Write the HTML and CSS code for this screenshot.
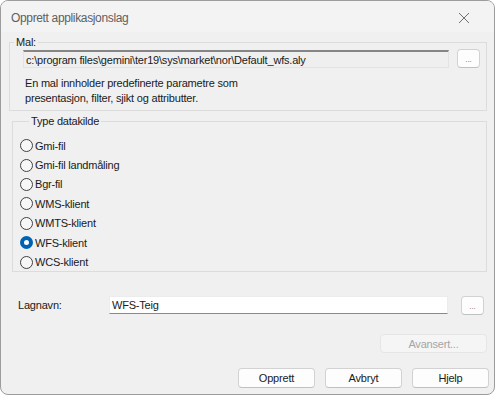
FILE: index.html
```html
<!DOCTYPE html>
<html lang="no">
<head>
  <meta charset="UTF-8">
  <title>Opprett applikasjonslag</title>
  <link rel="stylesheet" href="styles.css">
</head>
<body>
  <div class="window">
    <div class="titlebar">
      <span class="title">Opprett applikasjonslag</span>
      <svg class="close" width="12" height="12" viewBox="0 0 12 12">
        <path d="M1 1 L11 11 M11 1 L1 11" stroke="#707070" stroke-width="1" fill="none"/>
      </svg>
    </div>

    <div class="content">
      <fieldset class="group group-mal">
        <legend>Mal:</legend>
        <div class="path-row">
          <div class="readonly-box">c:\program files\gemini\ter19\sys\market\nor\Default_wfs.aly</div>
          <button class="btn btn-dots">...</button>
        </div>
        <p class="hint">En mal innholder predefinerte parametre som<br>presentasjon, filter, sjikt og attributter.</p>
      </fieldset>

      <fieldset class="group group-type">
        <legend>Type datakilde</legend>
        <label class="radio"><span class="dot"></span>Gmi-fil</label>
        <label class="radio"><span class="dot"></span>Gmi-fil landmåling</label>
        <label class="radio"><span class="dot"></span>Bgr-fil</label>
        <label class="radio"><span class="dot"></span>WMS-klient</label>
        <label class="radio"><span class="dot"></span>WMTS-klient</label>
        <label class="radio checked"><span class="dot"></span>WFS-klient</label>
        <label class="radio"><span class="dot"></span>WCS-klient</label>
      </fieldset>

      <div class="name-row">
        <span class="name-label">Lagnavn:</span>
        <div class="textbox">WFS-Teig</div>
        <button class="btn btn-dots">...</button>
      </div>

      <div class="adv-row">
        <button class="btn btn-adv" disabled>Avansert...</button>
      </div>

      <div class="actions">
        <button class="btn btn-main">Opprett</button>
        <button class="btn btn-main">Avbryt</button>
        <button class="btn btn-main">Hjelp</button>
      </div>
    </div>
  </div>
</body>
</html>
```

FILE: styles.css
```css
html, body {
  margin: 0;
  padding: 0;
  background: #ffffff;
}

body {
  font-family: "Liberation Sans", Arial, sans-serif;
  font-size: 11px;
  letter-spacing: -0.2px;
  color: #1a1a1a;
}

.window {
  box-sizing: border-box;
  width: 495px;
  height: 395px;
  background: #f0f0f0;
  border: 1px solid #9c9c9c;
  border-radius: 8px;
  overflow: hidden;
}

.titlebar {
  height: 31px;
  display: flex;
  align-items: center;
  justify-content: space-between;
  padding: 0 24px 0 10px;
  background: #f3f3f3;
}

.title {
  color: #5f5f5f;
  font-size: 12px;
  letter-spacing: -0.35px;
  margin-top: 2px;
}

.close {
  margin-top: 2px;
}

.content {
  padding: 0 5px 0 8px;
}

.group {
  margin: 0;
  border: 1px solid #dcdcdc;
  padding: 0;
}

.group legend {
  padding: 0 2px;
  margin-left: 4px;
  color: #1a1a1a;
}

.group-mal {
  width: 478px;
  box-sizing: border-box;
  height: 75px;
  margin-top: 4px;
}

.path-row {
  display: flex;
  align-items: flex-start;
  margin: 2px 0 0 13px;
}

.readonly-box {
  box-sizing: border-box;
  width: 426px;
  height: 18px;
  line-height: 16px;
  padding-left: 2px;
  border: 1px solid #e3e3e3;
  border-top: 2px solid #858585;
  background: #efefef;
  white-space: nowrap;
  overflow: hidden;
}

.btn {
  font-family: inherit;
  font-size: 11px;
  letter-spacing: -0.2px;
  color: #1a1a1a;
  background: #fdfdfd;
  border: 1px solid #d2d2d2;
  border-bottom-color: #c0c0c0;
  border-radius: 4px;
  padding: 0;
  box-sizing: border-box;
}

.btn-dots {
  width: 23px;
  height: 19px;
  font-size: 8px;
  letter-spacing: 0;
  line-height: 12px;
  padding-top: 3px;
  color: #707070;
  margin-left: 8px;
  margin-top: -1px;
}

.hint {
  margin: 8px 0 0 15px;
  line-height: 15px;
}

.group-type {
  width: 475px;
  box-sizing: border-box;
  height: 157px;
  margin: 4px 0 0 3px;
  padding: 9px 0 0 7px;
}

.group-type legend {
  margin-left: 9px;
}

.radio {
  display: flex;
  align-items: center;
  height: 19.4px;
  gap: 2px;
}

.dot {
  box-sizing: border-box;
  width: 13px;
  height: 13px;
  border: 1px solid #404040;
  border-radius: 50%;
  background: #f7f7f7;
}

.radio.checked .dot {
  border: 4px solid #0063b1;
  background: #ffffff;
}

.name-row {
  display: flex;
  align-items: center;
  margin-top: 23px;
  height: 20px;
}

.name-label {
  width: 91px;
  padding-left: 9px;
}

.textbox {
  box-sizing: border-box;
  width: 339px;
  height: 18px;
  line-height: 17px;
  padding-left: 2px;
  background: #ffffff;
  border: 1px solid #ececec;
  border-bottom: 1px solid #8a8a8a;
}

.name-row .btn-dots {
  margin-left: 13px;
  margin-top: 1px;
}

.adv-row {
  display: flex;
  justify-content: flex-end;
  margin-top: 19px;
  padding-right: 2px;
}

.btn-adv {
  width: 107px;
  height: 19px;
  background: #f5f5f5;
  border-color: #e6e6e6;
  color: #a5a5a5;
}

.actions {
  display: flex;
  justify-content: flex-end;
  gap: 10px;
  margin-top: 15px;
}

.btn-main {
  width: 77px;
  height: 20px;
}
```
